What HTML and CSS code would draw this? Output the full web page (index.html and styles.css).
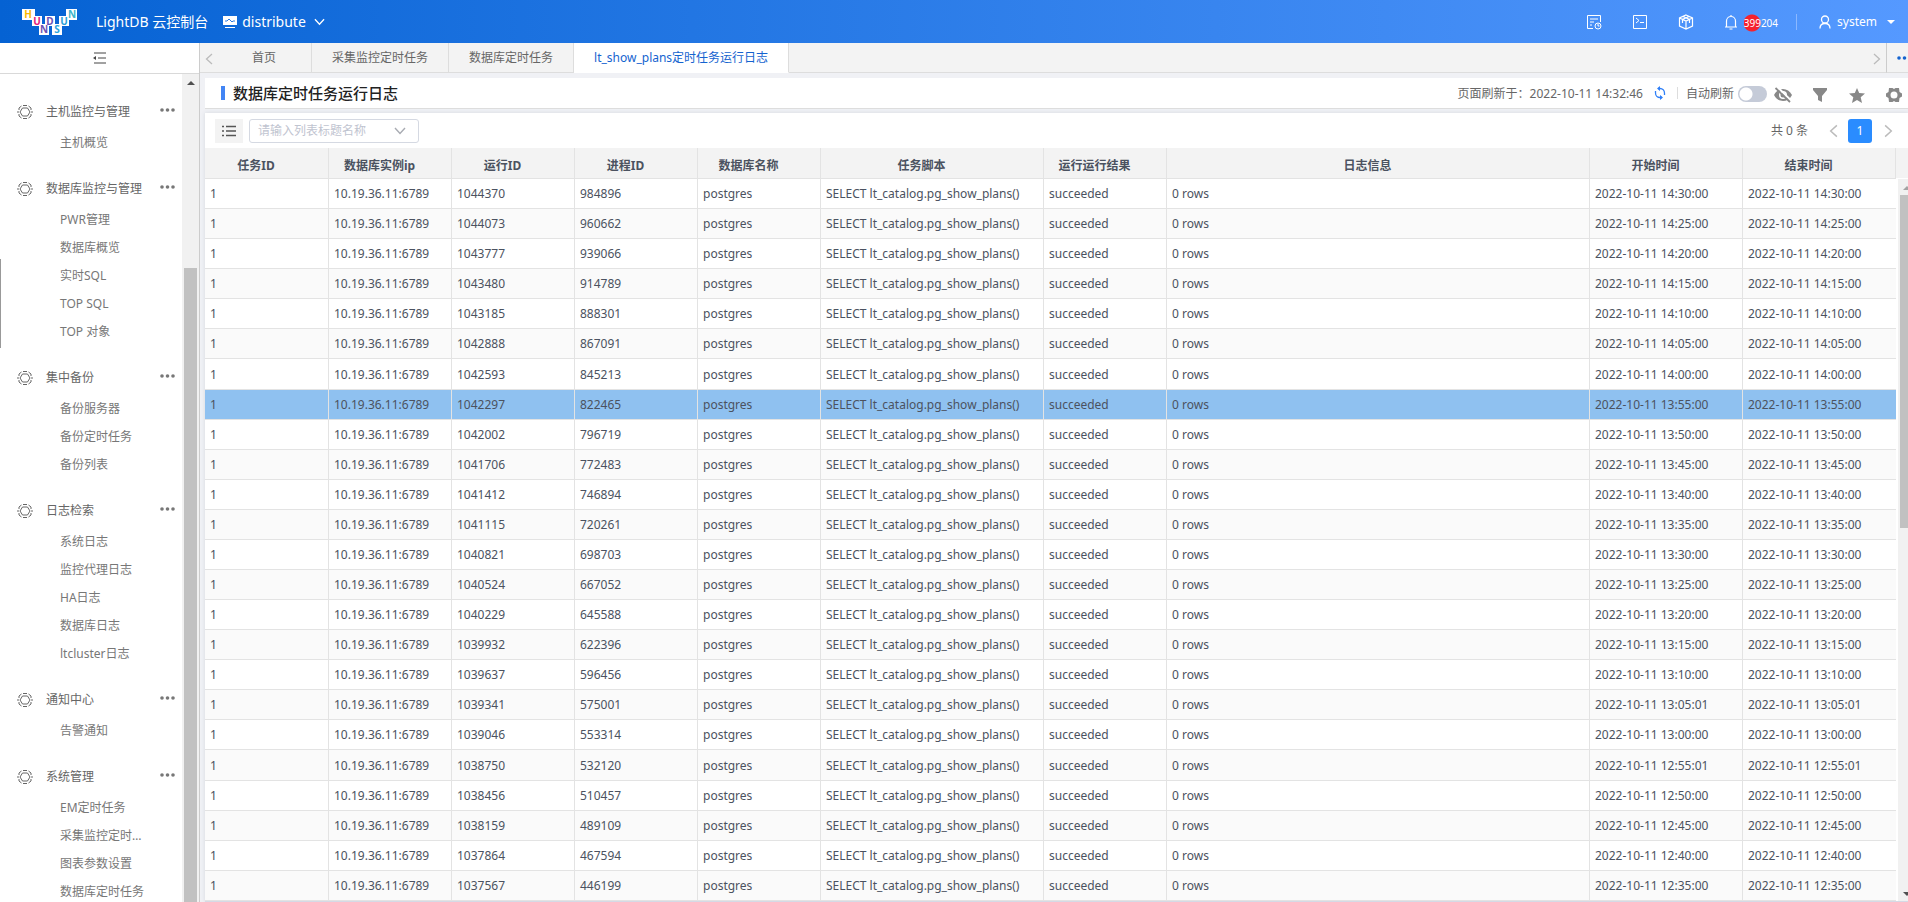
FILE: index.html
```html
<!DOCTYPE html>
<html lang="zh-CN">
	<head>
		<meta charset="UTF-8">
		<meta name="viewport" content="width=device-width, initial-scale=1">
		<title>LightDB 云控制台</title>
		<link rel="stylesheet" href="styles.css">
	</head>

	<body>
		<svg class="sprite" aria-hidden="true">
			<symbol id="gear" viewBox="0 0 16 16">
				<path d="M6 1.500h4M11.500 2l2.500 2v2M15 7v2M14 10v2l-2.500 2M10 14.500H6M4.500 14L2 12v-2M1 9V7M2 6V4l2.500-2" fill="none" stroke="currentColor"/>
				<path d="M5.500 4h5L13 8l-2.500 4h-5L3 8z" fill="none" stroke="currentColor"/>
			</symbol>
			<symbol id="dots" viewBox="0 0 15 4"><circle cx="2" cy="2" r="1.800"/><circle cx="7.500" cy="2" r="1.800"/><circle cx="13" cy="2" r="1.800"/></symbol>
			<symbol id="left" viewBox="0 0 8 12"><path d="M7 1L1.500 6 7 11" fill="none" stroke="currentColor" stroke-width="1.300"/></symbol>
			<symbol id="right" viewBox="0 0 8 12"><path d="M1 1l5.500 5L1 11" fill="none" stroke="currentColor" stroke-width="1.300"/></symbol>
			<symbol id="down" viewBox="0 0 12 8"><path d="M1 1l5 5.500L11 1" fill="none" stroke="currentColor" stroke-width="1.400"/></symbol>
		</svg>

		<header class="topbar">
			<svg class="logo" viewBox="0 0 56 28" role="img" aria-label="HUNDSUN">
				<path fill="#fff" d="M0 1h13v11H0zM10 8h10v10H10zM17 16h10v11H17zM23 8h10v10H23zM30 16h10v11H30zM37 8h10v10H37zM44 1h11v11H44z"/>
				<g class="logo-text">
					<text x="6" y="10" fill="#f9b800">H</text>
					<text x="15" y="17" fill="#e3197b">U</text>
					<text x="22" y="25" fill="#6a50b5">N</text>
					<text x="28" y="17" fill="#6a50b5">D</text>
					<text x="35" y="25" fill="#2aa5e0">S</text>
					<text x="42" y="17" fill="#2b9fd8">U</text>
					<text x="50" y="10" fill="#3cb4cc">N</text>
				</g>
			</svg>
			<h1>LightDB 云控制台</h1>
			<button class="cluster">
				<svg width="14" height="12" viewBox="0 0 14 12"><path fill="#fff" d="M0 0h14v9H0zM2 11h10v1H2z"/><path d="M2 5h2l2-2 3 3 1-1h2" fill="none" stroke="#2f7be0"/></svg>
				distribute
				<svg width="11" height="8"><use href="#down"/></svg>
			</button>

			<div class="tools">
				<button aria-label="任务"><svg width="16" height="16" viewBox="0 0 16 16"><path d="M7 14.500H1.500v-13h13V8M4 5h8M4 8h4M4 11h2" fill="none" stroke="#fff"/><circle cx="12" cy="12" r="3" fill="none" stroke="#fff"/><path d="M12 10v2h1.500" fill="none" stroke="#fff"/></svg></button>
				<button aria-label="终端"><svg width="16" height="16" viewBox="0 0 16 16"><path d="M1.500 1.500h13v13h-13zM4 4l3 2.500L4 9M8 8.500h4" fill="none" stroke="#fff"/></svg></button>
				<button aria-label="组件"><svg width="16" height="16" viewBox="0 0 16 16"><path d="M8 1l6.500 3v8L8 15l-6.500-3V4zM1.500 4L8 7l6.500-3M8 7v8M5 2.500L11.500 5.500V9M11 2.500L4.500 5.500V9" fill="none" stroke="#fff" stroke-width="1.200"/></svg></button>
				<button class="alarm" aria-label="告警">
					<svg width="14" height="16" viewBox="0 0 14 16"><path d="M1 13h12M2.500 13V7a4.500 4.500 0 0 1 9 0v6M7 1v2M5.500 15h3" fill="none" stroke="#fff" stroke-width="1.200"/></svg>
					<span class="count">399204</span>
				</button>
				<button class="user">
					<svg width="12" height="14" viewBox="0 0 12 14"><circle cx="6" cy="4.500" r="3.500" fill="none" stroke="#fff" stroke-width="1.300"/><path d="M1 13.500c0-3 2-5 5-5s5 2 5 5" fill="none" stroke="#fff" stroke-width="1.300"/></svg>
					system
					<i class="caret"></i>
				</button>
			</div>
		</header>

		<div class="page">
			<aside class="sidebar">
				<button class="fold" aria-label="收起菜单"><svg width="14" height="12" viewBox="0 0 14 12"><path d="M1 1h12M5 6h8M1 11h12" stroke="#444" fill="none"/><path d="M0 6l3-2v4z" fill="#444"/></svg></button>
				<div class="menu-wrap">
					<nav class="menu" id="menu"></nav>
					<div class="scrollbar menu-scroll"><i class="arrow-up"></i><div class="thumb"></div></div>
				</div>
				<div class="handle"></div>
			</aside>

			<main class="main">
				<nav class="tabs">
					<button class="tab-nav" aria-label="向左"><svg width="8" height="12"><use href="#left"/></svg></button>
					<a class="tab home" href="#">首页</a>
					<a class="tab" href="#">采集监控定时任务</a>
					<a class="tab" href="#">数据库定时任务</a>
					<a class="tab active" href="#">lt_show_plans定时任务运行日志</a>
					<button class="tab-nav tab-next" aria-label="向右"><svg width="8" height="12"><use href="#right"/></svg></button>
					<button class="tab-more" aria-label="更多"><svg class="dots"><use href="#dots"/></svg></button>
				</nav>

				<div class="content">
					<div class="title-bar">
						<h2>数据库定时任务运行日志</h2>
						<span class="refreshed">页面刷新于：2022-10-11 14:32:46</span>
						<button class="refresh" aria-label="刷新"><svg width="12" height="14" viewBox="0 0 12 14"><path d="M4 2.500h2A4.500 4.500 0 0 1 10.500 7v2M8 11.500H6A4.500 4.500 0 0 1 1.500 7V5" fill="none" stroke="#2f7ff7" stroke-width="1.300"/><path d="M3 2.500L6 0v5zM9 11.500L6 9v5z" fill="#2f7ff7"/></svg></button>
						<label class="auto">自动刷新 <input type="checkbox"></label>
						<div class="actions">
							<button aria-label="隐藏"><svg width="18" height="16" viewBox="0 0 18 16"><path d="M0 8c4-8 14-8 18 0-4 8-14 8-18 0z" fill="#888"/><circle cx="9" cy="8" r="4" fill="#fff"/><circle cx="9" cy="8" r="2.500" fill="#888"/><path d="M3.500 0l14 14" stroke="#fff" stroke-width="2"/><path d="M1.500 1l14.500 14" stroke="#888" stroke-width="1.800"/></svg></button>
							<button aria-label="筛选"><svg width="14" height="14" viewBox="0 0 14 14"><path d="M0 0h14v2L9 8v6l-4-2V8L0 2z" fill="#888"/></svg></button>
							<button aria-label="收藏"><svg width="16" height="15" viewBox="0 0 16 15"><path d="M8 0l2.200 5 5.800.5-4.300 3.800L13 15l-5-3-5 3 1.300-5.700L0 5.500 5.800 5z" fill="#888"/></svg></button>
							<button aria-label="设置"><svg width="16" height="16" viewBox="0 0 16 16"><path fill="#888" fill-rule="evenodd" d="M3 1h3.500L8 2l1.500-1H13l.5 4L16 6.500v3L13.500 11l-.5 4H9.500L8 14l-1.500 1H3l-.5-4L0 9.500v-3L2.500 5zM8 4.500a3.500 3.500 0 1 0 0 7 3.500 3.500 0 0 0 0-7z"/></svg></button>
						</div>
					</div>

					<section class="panel">
						<div class="toolbar">
							<button class="list-btn" aria-label="列设置"><svg width="14" height="12" viewBox="0 0 14 12"><path d="M4 1.500h10M4 6h10M4 10.500h10" stroke="#555" stroke-width="1.300"/><path d="M0 1.500h2M0 6h2M0 10.500h2" stroke="#555" stroke-width="1.500"/></svg></button>
							<div class="select">
								<select aria-label="列表标题名称"><option>请输入列表标题名称</option></select>
								<svg width="12" height="8"><use href="#down"/></svg>
							</div>
							<div class="pager">
								<span>共 0 条</span>
								<button aria-label="上一页"><svg width="9" height="14"><use href="#left"/></svg></button>
								<button class="current">1</button>
								<button aria-label="下一页"><svg width="9" height="14"><use href="#right"/></svg></button>
							</div>
						</div>
						<div class="table-wrap">
							<table>
								<colgroup>
									<col class="w-first"><col class="w-s"><col class="w-s"><col class="w-s"><col class="w-s"><col class="w-script"><col class="w-s"><col><col class="w-time"><col class="w-time">
								</colgroup>
								<thead>
									<tr><th>任务ID</th><th>数据库实例ip</th><th>运行ID</th><th>进程ID</th><th>数据库名称</th><th>任务脚本</th><th>运行运行结果</th><th>日志信息</th><th>开始时间</th><th>结束时间</th></tr>
								</thead>
								<tbody id="rows"></tbody>
							</table>
							<div class="scrollbar table-scroll"><i class="arrow-up"></i><div class="thumb"></div><i class="arrow-down"></i></div>
						</div>
					</section>
				</div>
			</main>
		</div>

		<script src="script.js"></script>
	</body>
</html>
```
FILE: styles.css
```css
* {
	box-sizing: border-box;
	margin: 0;
	padding: 0;
}
body {
	display: flex;
	flex-direction: column;
	height: 100vh;
	overflow: hidden;
	font: 12px/20px "Noto Sans", "Noto Sans CJK SC", sans-serif;
	color: #666;
	background: #f0f1f5;
}
button {
	display: flex;
	align-items: center;
	justify-content: center;
	font: inherit;
	color: inherit;
	background: none;
	border: none;
	cursor: pointer;
}
a {
	color: inherit;
	text-decoration: none;
}
svg {
	flex: none;
}
.sprite {
	position: absolute;
	width: 0;
	height: 0;
}

/* top bar */
.topbar {
	display: flex;
	align-items: center;
	flex: none;
	height: 43px;
	padding: 0 13px 0 22px;
	color: #fff;
	background: linear-gradient(90deg, #0562d3, #5599ff);
}
.logo {
	width: 56px;
	height: 28px;
}
.logo-text {
	font: bold 10px "Noto Sans", sans-serif;
	text-anchor: middle;
}
.topbar h1 {
	margin: 0 15px 0 18px;
	font-size: 14px;
	font-weight: normal;
}
.cluster {
	gap: 5px;
	font-size: 14px;
}
.cluster svg:last-child {
	margin-left: 3px;
}
.tools {
	display: flex;
	align-items: center;
	margin-left: auto;
}
.tools button {
	margin-left: 30px;
}
.tools .alarm {
	gap: 6px;
}
.count {
	padding-top: 2px;
	font-size: 10px;
	background: radial-gradient(circle at 8px 12px, #f5222d 8px, transparent 9px);
}
.tools .user {
	gap: 6px;
	height: 16px;
	margin-left: 18px;
	padding-left: 22px;
	border-left: 1px solid #8bb8ff;
}
.caret {
	margin-left: 4px;
	border: 4px solid transparent;
	border-top-color: #fff;
	border-bottom: none;
}

/* sidebar */
.page {
	display: flex;
	flex: 1;
	min-height: 0;
}
.sidebar {
	position: relative;
	display: flex;
	flex-direction: column;
	flex: none;
	width: 200px;
	background: #fff;
	border-right: 1px solid #ccc;
}
.fold {
	flex: none;
	height: 31px;
	border-bottom: 1px solid #d9d9d9;
}
.menu-wrap {
	display: flex;
	flex: 1;
	min-height: 0;
}
.menu {
	flex: 1;
	min-width: 0;
	overflow: hidden;
	padding-top: 21px;
}
.group {
	margin-bottom: 15px;
}
.group-title {
	display: flex;
	align-items: center;
	height: 34px;
	padding: 0 7px 0 17px;
}
.group-title .gear {
	width: 16px;
	height: 16px;
	margin-right: 13px;
}
.dots {
	width: 15px;
	height: 4px;
	fill: currentColor;
}
.group-title .dots {
	margin: 0 0 4px auto;
	color: #777;
}
.menu li {
	height: 28px;
	padding: 0 32px 0 60px;
	line-height: 28px;
	list-style: none;
	color: #777;
	white-space: nowrap;
	overflow: hidden;
	text-overflow: ellipsis;
}
.scrollbar {
	display: flex;
	flex-direction: column;
	align-items: center;
	background: #f1f1f1;
}
.scrollbar .thumb {
	width: 13px;
	background: #c1c1c1;
}
.menu-scroll {
	width: 17px;
	padding-top: 7px;
}
.menu-scroll .thumb {
	flex: 1;
	margin-top: 183px;
}
.arrow-up,
.arrow-down {
	border: 4px solid transparent;
}
.arrow-up {
	border-top: none;
	border-bottom-color: #505050;
}
.arrow-down {
	border-bottom: none;
	border-top-color: #505050;
}
.handle {
	position: absolute;
	top: 216px;
	left: 0;
	width: 1px;
	height: 89px;
	background: #999;
}

/* tabs */
.main {
	display: flex;
	flex-direction: column;
	flex: 1;
	min-width: 0;
}
.tabs {
	display: flex;
	flex: none;
	height: 30px;
	background: #f3f3f3;
}
.tabs > * {
	border-bottom: 1px solid #ddd;
}
.tab-nav {
	width: 17px;
	padding-top: 3px;
	color: #bbb;
}
.tab {
	padding: 0 20px;
	line-height: 29px;
	border-right: 1px solid #ddd;
}
.tab.home {
	padding: 0 35px;
}
.tab.active {
	color: #1463cf;
	background: #fff;
	border-bottom-color: #fff;
}
.tab-next {
	flex: 1;
	justify-content: flex-end;
	padding-right: 5px;
}
.tab-more {
	width: 22px;
	padding-left: 10px;
	color: #1463cf;
	border-left: 1px solid #ccc;
	justify-content: flex-start;
	overflow: hidden;
}

/* content */
.content {
	display: flex;
	flex-direction: column;
	flex: 1;
	gap: 4px;
	min-height: 0;
	padding: 5px 0 0 5px;
}
.title-bar {
	display: flex;
	align-items: center;
	flex: none;
	height: 31px;
	padding: 0 6px 0 16px;
	background: #fff;
	border-bottom: 1px solid #ddd;
}
.title-bar h2 {
	margin-right: auto;
	padding-left: 8px;
	font-size: 15px;
	font-weight: 500;
	line-height: 14px;
	color: #222;
	border-left: 4px solid #4285f4;
}
.refreshed,
.auto {
	padding-top: 2px;
}
.refresh {
	margin: 0 11px;
}
.auto {
	display: flex;
	align-items: center;
	gap: 4px;
	padding-left: 9px;
	background: linear-gradient(#ddd, #ddd) 0 center / 1px 12px no-repeat;
}
.auto input {
	appearance: none;
	width: 29px;
	height: 16px;
	background: radial-gradient(circle at 8px 8px, #fff 6px, transparent 7px) #c5cbd8;
	border-radius: 8px;
}
.actions {
	display: flex;
	align-items: center;
	gap: 21px;
	margin-left: 8px;
	padding-top: 4px;
}
.actions button {
	width: 16px;
	height: 16px;
}
.panel {
	display: flex;
	flex-direction: column;
	flex: 1;
	min-height: 0;
	background: #fff;
	border-bottom: 1px solid #d5d9e5;
	box-shadow: 0 0 4px #d5d8de;
}
.toolbar {
	display: flex;
	align-items: center;
	flex: none;
	height: 35px;
	padding: 0 15px 0 10px;
}
.list-btn {
	width: 28px;
	height: 24px;
	background: #f3f3f3;
}
.select {
	display: flex;
	align-items: center;
	width: 170px;
	height: 24px;
	margin-left: 6px;
	padding: 0 12px 0 8px;
	color: #a8abb2;
	border: 1px solid #d5d9e2;
	border-radius: 3px;
}
.select select {
	appearance: none;
	flex: 1;
	min-width: 0;
	font: inherit;
	color: #bfc4d0;
	background: none;
	border: none;
}
.pager {
	display: flex;
	align-items: center;
	margin-left: auto;
	color: #666;
}
.pager span {
	margin-right: 21px;
}
.pager button {
	color: #bbb;
}
.pager .current {
	width: 24px;
	height: 24px;
	margin: 0 12px 0 10px;
	color: #fff;
	background: #2a8cff;
	border-radius: 3px;
}
.table-wrap {
	display: grid;
	grid-template-columns: 1fr 12px;
	flex: 1;
	min-height: 0;
	overflow: hidden;
	background: linear-gradient(#f3f3f3, #f3f3f3) 0 0 / 100% 30px no-repeat;
}
table {
	table-layout: fixed;
	width: 100%;
	border-collapse: separate;
	border-spacing: 0;
	color: #4b5260;
}
.w-first {
	width: 124px;
}
.w-s {
	width: 123px;
}
.w-script {
	width: 223px;
}
.w-time {
	width: 153px;
}
th,
td {
	height: 30px;
	padding: 1px 5px 0;
	text-align: left;
	line-height: 20px;
	white-space: nowrap;
	border-right: 1px solid #e3e3e3;
	border-bottom: 1px solid #e3e3e3;
}
th {
	height: 31px;
	padding: 6px 26px 0 5px;
	text-align: center;
	background: #f3f3f3;
}
td:last-child {
	border-right: none;
}
tbody tr:nth-child(even) {
	background: #fafafa;
}
tbody tr.selected {
	background: #8fc1f0;
}
.table-scroll {
	align-items: flex-start;
	margin: 31px 0 0 2px;
	padding: 7px 0 5px 2px;
	overflow: hidden;
}
.table-scroll .thumb {
	flex: none;
	height: 333px;
	margin: 5px 0 auto;
}
.table-scroll i {
	margin-left: 3px;
}
.table-scroll .arrow-up {
	border-bottom-color: #a3a3a3;
}
```
FILE: script.js
```js
const menu = [
	["主机监控与管理", ["主机概览"]],
	["数据库监控与管理", ["PWR管理", "数据库概览", "实时SQL", "TOP SQL", "TOP 对象"]],
	["集中备份", ["备份服务器", "备份定时任务", "备份列表"]],
	["日志检索", ["系统日志", "监控代理日志", "HA日志", "数据库日志", "ltcluster日志"]],
	["通知中心", ["告警通知"]],
	["系统管理", ["EM定时任务", "采集监控定时任务", "图表参数设置", "数据库定时任务"]]
];

// [run id, process id, time]
const runs = [
	[1044370, 984896, "14:30:00"],
	[1044073, 960662, "14:25:00"],
	[1043777, 939066, "14:20:00"],
	[1043480, 914789, "14:15:00"],
	[1043185, 888301, "14:10:00"],
	[1042888, 867091, "14:05:00"],
	[1042593, 845213, "14:00:00"],
	[1042297, 822465, "13:55:00"],
	[1042002, 796719, "13:50:00"],
	[1041706, 772483, "13:45:00"],
	[1041412, 746894, "13:40:00"],
	[1041115, 720261, "13:35:00"],
	[1040821, 698703, "13:30:00"],
	[1040524, 667052, "13:25:00"],
	[1040229, 645588, "13:20:00"],
	[1039932, 622396, "13:15:00"],
	[1039637, 596456, "13:10:00"],
	[1039341, 575001, "13:05:01"],
	[1039046, 553314, "13:00:00"],
	[1038750, 532120, "12:55:01"],
	[1038456, 510457, "12:50:00"],
	[1038159, 489109, "12:45:00"],
	[1037864, 467594, "12:40:00"],
	[1037567, 446199, "12:35:00"]
];
const selectedRun = 1042297;

document.getElementById("menu").innerHTML = menu.map(([title, items]) => `
	<div class="group">
		<div class="group-title"><svg class="gear"><use href="#gear"/></svg>${title}<svg class="dots"><use href="#dots"/></svg></div>
		<ul>${items.map(item => `<li><a href="#">${item}</a></li>`).join("")}</ul>
	</div>`).join("");

document.getElementById("rows").innerHTML = runs.map(([run, pid, time]) => {
	const date = "2022-10-11 " + time;
	const cells = [1, "10.19.36.11:6789", run, pid, "postgres", "SELECT lt_catalog.pg_show_plans()", "succeeded", "0 rows", date, date];
	return `<tr class="${run === selectedRun ? "selected" : ""}">${cells.map(c => `<td>${c}</td>`).join("")}</tr>`;
}).join("");
```
